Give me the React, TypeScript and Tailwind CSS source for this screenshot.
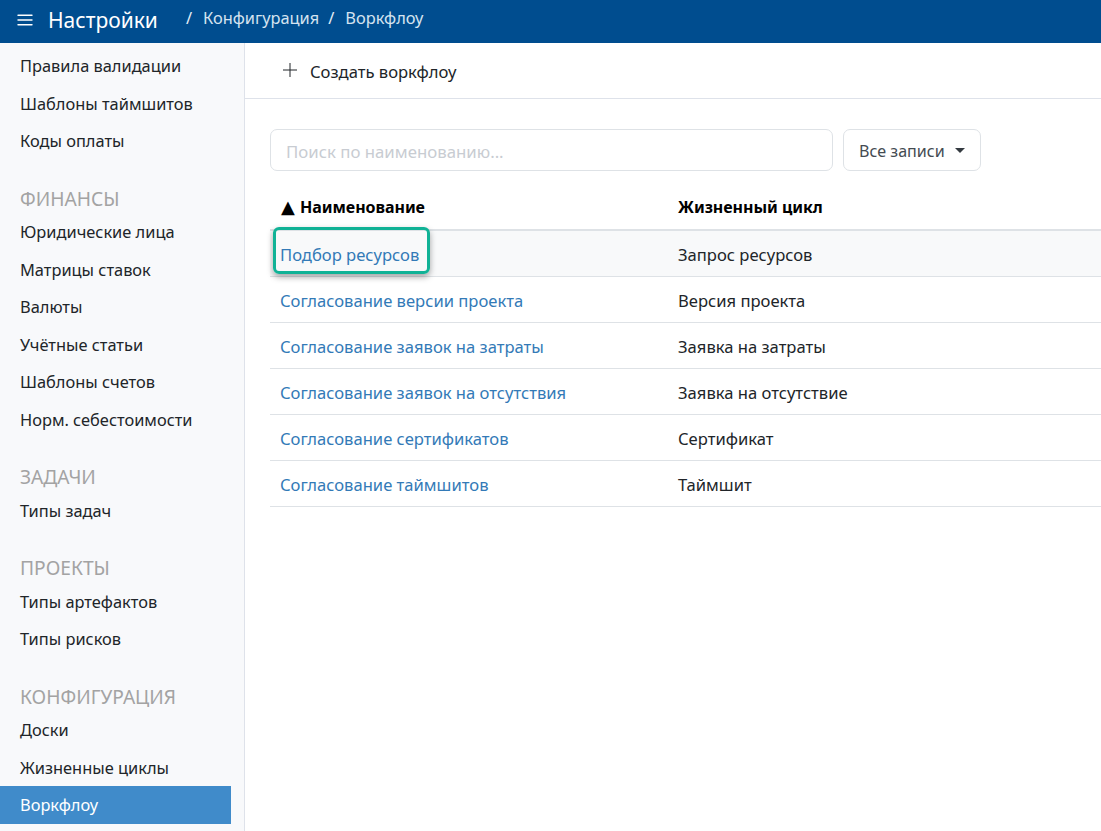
import React from "react";

type SideEntry = { h?: string; t?: string; active?: boolean };
const side: SideEntry[] = [
  { t: "Правила валидации" },
  { t: "Шаблоны таймшитов" },
  { t: "Коды оплаты" },
  { h: "ФИНАНСЫ" },
  { t: "Юридические лица" },
  { t: "Матрицы ставок" },
  { t: "Валюты" },
  { t: "Учётные статьи" },
  { t: "Шаблоны счетов" },
  { t: "Норм. себестоимости" },
  { h: "ЗАДАЧИ" },
  { t: "Типы задач" },
  { h: "ПРОЕКТЫ" },
  { t: "Типы артефактов" },
  { t: "Типы рисков" },
  { h: "КОНФИГУРАЦИЯ" },
  { t: "Доски" },
  { t: "Жизненные циклы" },
  { t: "Воркфлоу", active: true },
];

const rows = [
  ["Подбор ресурсов", "Запрос ресурсов"],
  ["Согласование версии проекта", "Версия проекта"],
  ["Согласование заявок на затраты", "Заявка на затраты"],
  ["Согласование заявок на отсутствия", "Заявка на отсутствие"],
  ["Согласование сертификатов", "Сертификат"],
  ["Согласование таймшитов", "Таймшит"],
];

export default function App() {
  return (
    <div className="h-[831px] w-[1101px] overflow-hidden bg-white font-['Noto_Sans',sans-serif] text-[16.6px] text-[#212529] flex flex-col">
      <header className="h-[43px] shrink-0 bg-[#004d8f] flex items-center text-white">
        <svg className="ml-[17px] w-[16px] h-[16px] -mt-[3px]" viewBox="0 0 16 16" fill="none" stroke="#fff" strokeWidth="1.4" strokeLinecap="round">
          <path d="M1 3.2h14M1 8h14M1 12.8h14" />
        </svg>
        <span className="ml-[15px] text-[21px] leading-none -mt-[2px]">Настройки</span>
        <div className="flex items-center -mt-[6px] text-[16.4px]">
          <span className="ml-[28px] text-[#e3ecf5]">/</span>
          <span className="ml-[11px] text-[#d5e3f0]">Конфигурация</span>
          <span className="ml-[9px] text-[#e3ecf5]">/</span>
          <span className="ml-[11px] text-[#d5e3f0]">Воркфлоу</span>
        </div>
      </header>
      <div className="flex flex-1 min-h-0">
        <aside className="w-[245px] shrink-0 bg-[#f8f9fb] border-r border-[#dee2ea] pt-[4px] pr-[13px] overflow-hidden text-[16.4px]">
          {side.map((s, i) =>
            s.h ? (
              <div key={i} className="mt-[24px] h-[29.5px] leading-[30px] pl-[20px] text-[19.2px] text-[#a3a3a3]">
                {s.h}
              </div>
            ) : (
              <div
                key={i}
                className={
                  "h-[37.5px] leading-[38px] pl-[20px] " +
                  (s.active ? "bg-[#408bca] text-white" : "text-[#212529]")
                }
              >
                {s.t}
              </div>
            )
          )}
        </aside>
        <main className="flex-1 min-w-0 flex flex-col">
          <div className="h-[56px] shrink-0 border-b border-[#dee2ea] flex items-center pl-[38px]">
            <svg className="w-[14px] h-[14px] -mt-[1px]" viewBox="0 0 14 14" fill="none" stroke="#212529" strokeWidth="1">
              <path d="M7 0v14M0 7h14" />
            </svg>
            <span className="ml-[13px] mt-[4px]">Создать воркфлоу</span>
          </div>
          <div className="pl-[25px] pt-[30px]">
            <div className="flex gap-[10px]">
              <div className="w-[563px] h-[42px] rounded-[7px] border border-[#dee2e6] flex items-center pl-[15px] pt-[3px] text-[16.8px] text-[#c8ccd2]">
                Поиск по наименованию...
              </div>
              <div className="w-[138px] h-[42px] rounded-[7px] border border-[#dee2e6] flex items-center pl-[15px] text-[16.1px] text-[#444b52]">
                <span className="pt-[3px]">Все записи</span>
                <span className="ml-[10px] w-0 h-0 border-x-[5.5px] border-x-transparent border-t-[5px] border-t-[#343a40]" />
              </div>
            </div>
            <div className="relative mt-[13px]">
              <div className="grid grid-cols-[397px_1fr] h-[47px] border-b-2 border-[#dee2e6] items-center font-bold text-[16px] tracking-[-0.05px] text-black pl-[11px]">
                <span className="flex items-center">
                  <span className="font-['DejaVu_Sans'] text-[18px] font-normal leading-none w-[19px]">▲</span>
                  Наименование
                </span>
                <span>Жизненный цикл</span>
              </div>
              {rows.map((r, i) => (
                <div
                  key={i}
                  className={
                    "grid grid-cols-[398px_1fr] h-[46px] border-b border-[#dee2e6] items-center pl-[10px] " +
                    (i === 0 ? "bg-[#f8f9fa]" : "")
                  }
                >
                  <span className="text-[#337ab7] pt-[4px]">{r[0]}</span>
                  <span className="text-[#212529] pt-[4px]">{r[1]}</span>
                </div>
              ))}
              <div className="absolute left-[3px] top-[43px] w-[157px] h-[47px] rounded-[6px] border-[3px] border-[#10b296] shadow-[0_3px_6px_rgba(0,0,0,0.35)]" />
            </div>
          </div>
        </main>
      </div>
    </div>
  );
}
